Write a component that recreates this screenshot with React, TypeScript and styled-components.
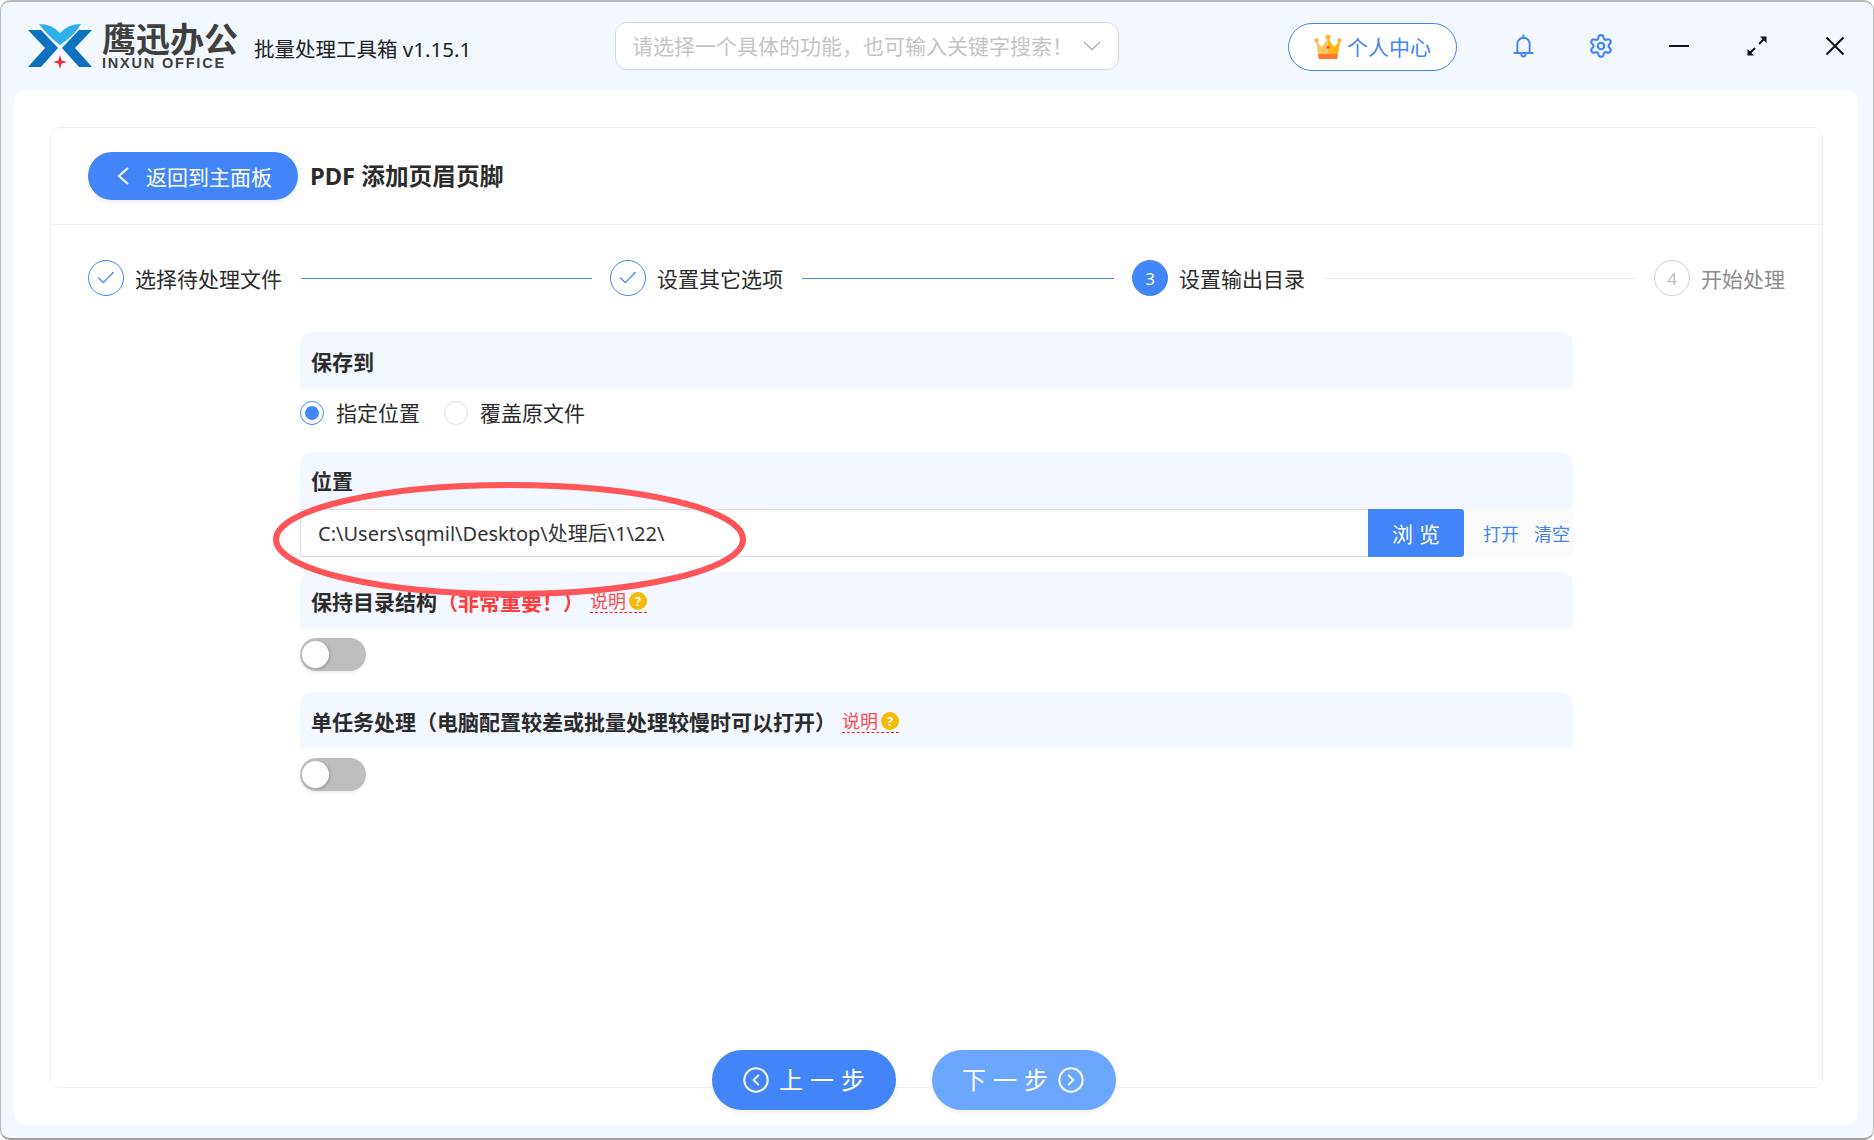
import React from 'react';
import styled, { createGlobalStyle } from 'styled-components';
import { ChevronDown, CircleChevronLeft, CircleChevronRight, Check, Settings } from 'lucide-react';

const BLUE = '#4285f9';

type StepState = 'done' | 'active' | 'todo';

const steps: { label: string; state: StepState; num: number }[] = [
  { label: '选择待处理文件', state: 'done', num: 1 },
  { label: '设置其它选项', state: 'done', num: 2 },
  { label: '设置输出目录', state: 'active', num: 3 },
  { label: '开始处理', state: 'todo', num: 4 },
];

const PATH = 'C:\\Users\\sqmil\\Desktop\\处理后\\1\\22\\';

const Logo = () => (
  <svg width="80" height="56" viewBox="0 0 80 56">
    <path d="M17 6 Q30 6 38 15 Q46 6 59 6 Q52 18 38 27 Q26 18 17 6Z" fill="#2fb0e8" />
    <path d="M6 12 H19 L36 30 L19 49 H6 L23 30Z" fill="#0c72bf" />
    <path d="M70 12 H57 L40 30 L57 49 H70 L53 30Z" fill="#0c72bf" />
    <path d="M38 37 L39.6 42.4 L45 44 L39.6 45.6 L38 51 L36.4 45.6 L31 44 L36.4 42.4Z" fill="#ee2b36" />
  </svg>
);

const Crown = () => (
  <svg width="28" height="26" viewBox="0 0 28 26">
    <path d="M2 7 L8 13 L14 4 L20 13 L26 7 L24 20 H4Z" fill="#fbc667" />
    <path d="M14 4 L20 13 L26 7 L24 20 H14Z" fill="#ffb414" />
    <circle cx="2.5" cy="6.5" r="2.2" fill="#f9b84a" />
    <circle cx="14" cy="3" r="2.6" fill="#f9b84a" />
    <circle cx="25.5" cy="6.5" r="2.2" fill="#f9b84a" />
    <rect x="12.5" y="12" width="3" height="2.5" fill="#e2572b" />
    <path d="M4 20 H24 L23.4 25 H4.6Z" fill="#ff7a30" />
  </svg>
);

const Bell = () => (
  <svg width="21" height="24" viewBox="0 0 24 26" fill="none" stroke={BLUE} strokeWidth="2.2" strokeLinecap="round">
    <path d="M12 1 V3.5" />
    <path d="M5 21 V10.5 a7 7 0 0 1 14 0 V21" />
    <path d="M1.5 21 H22.5" />
    <path d="M9.5 22.5 a2.5 2.5 0 0 0 5 0" />
  </svg>
);

const BackArrow = () => (
  <svg width="14" height="20" viewBox="0 0 14 20" fill="none" stroke="#fff" strokeWidth="2">
    <path d="M12 2 L3 10 L12 18" />
  </svg>
);

const Minimize = () => (
  <svg width="20" height="20" viewBox="0 0 20 20" stroke="#111" strokeWidth="2">
    <path d="M0 10 H20" />
  </svg>
);

const Expand = () => (
  <svg width="20" height="20" viewBox="0 0 20 20" fill="#111" stroke="#111" strokeWidth="2">
    <path d="M2 18 L8 12" />
    <path d="M12 8 L18 2" />
    <path d="M0.5 19.5 V13 L7 19.5Z" strokeWidth="0" />
    <path d="M19.5 0.5 V7 L13 0.5Z" strokeWidth="0" />
  </svg>
);

const Close = () => (
  <svg width="20" height="20" viewBox="0 0 20 20" stroke="#111" strokeWidth="2">
    <path d="M1.5 1.5 L18.5 18.5 M18.5 1.5 L1.5 18.5" />
  </svg>
);

const App: React.FC = () => {
  return (
    <Window>
      <GlobalStyle />
      <Header>
        <Brand>
          <Logo />
          <BrandText>
            <BrandName>鹰迅办公</BrandName>
            <BrandSub>INXUN OFFICE</BrandSub>
          </BrandText>
        </Brand>
        <Subtitle>批量处理工具箱 v1.15.1</Subtitle>
        <Search>
          <SearchHint>请选择一个具体的功能，也可输入关键字搜索！</SearchHint>
          <ChevronDown size={30} color="#aaa" strokeWidth={1} />
        </Search>
        <UserButton>
          <Crown />
          <UserText>个人中心</UserText>
        </UserButton>
        <IconSlot>
          <Bell />
        </IconSlot>
        <IconSlot>
          <Settings size={26} color={BLUE} strokeWidth={2} />
        </IconSlot>
        <IconSlot>
          <Minimize />
        </IconSlot>
        <IconSlot>
          <Expand />
        </IconSlot>
        <IconSlot>
          <Close />
        </IconSlot>
      </Header>
      <Panel>
        <Card>
          <CardHeader>
            <BackButton>
              <BackArrow />
              返回到主面板
            </BackButton>
            <PageTitle>PDF 添加页眉页脚</PageTitle>
          </CardHeader>
          <Stepper>
            {steps.map((step, i) => (
              <Step key={step.num} $last={i === steps.length - 1}>
                <StepCircle $state={step.state}>
                  {step.state === 'done' ? <Check size={22} strokeWidth={1.4} /> : step.num}
                </StepCircle>
                <StepLabel $state={step.state}>{step.label}</StepLabel>
                {i < steps.length - 1 && <StepLine $on={step.state === 'done'} />}
              </Step>
            ))}
          </Stepper>
          <Form>
            <SectionTitle>保存到</SectionTitle>
            <RadioRow>
              <RadioItem>
                <Radio $checked />
                <RadioText>指定位置</RadioText>
              </RadioItem>
              <RadioItem>
                <Radio />
                <RadioText>覆盖原文件</RadioText>
              </RadioItem>
            </RadioRow>
            <LocationTitle>位置</LocationTitle>
            <PathRow>
              <PathInput>{PATH}</PathInput>
              <BrowseButton>浏览</BrowseButton>
              <PathLinks>
                <a>打开</a>
                <a>清空</a>
              </PathLinks>
            </PathRow>
            <KeepTitle>
              保持目录结构<Important>（非常重要！）</Important>
              <Help>
                说明<HelpDot>?</HelpDot>
              </Help>
            </KeepTitle>
            <Toggle>
              <Knob />
            </Toggle>
            <SingleTitle>
              单任务处理（电脑配置较差或批量处理较慢时可以打开）
              <Help>
                说明<HelpDot>?</HelpDot>
              </Help>
            </SingleTitle>
            <Toggle>
              <Knob />
            </Toggle>
            <Ellipse width="473" height="115" viewBox="0 0 473 115">
              <ellipse cx="236.5" cy="57.5" rx="233.5" ry="54.5" fill="none" stroke="#ff5558" strokeWidth="6" />
            </Ellipse>
          </Form>
        </Card>
        <Footer>
          <NavButton>
            <CircleChevronLeft size={28} strokeWidth={1.7} />
            <NavText>上一步</NavText>
          </NavButton>
          <NavButton $light>
            <NavText>下一步</NavText>
            <CircleChevronRight size={28} strokeWidth={1.7} />
          </NavButton>
        </Footer>
      </Panel>
    </Window>
  );
};

export default App;

const GlobalStyle = createGlobalStyle`
  * {
    box-sizing: border-box;
  }
  html, body {
    margin: 0;
    padding: 0;
    background: #fff;
  }
  body {
    font-family: "Noto Sans", "Noto Sans CJK SC", sans-serif;
    font-size: 21px;
    color: #2b2b2b;
  }
`;

const Window = styled.div`
  width: 1874px;
  height: 1140px;
  display: flex;
  flex-direction: column;
  overflow: hidden;
  background: #f3f7ff;
  border-style: solid;
  border-color: #b9b9b9;
  border-width: 2px 1px 2px 1px;
  border-bottom-color: #9c9c9c;
  border-radius: 10px;
`;

const Header = styled.header`
  flex: none;
  height: 88px;
  padding-left: 21px;
  display: flex;
  align-items: center;
  > * {
    flex: none;
  }
`;

const Brand = styled.div`
  width: 232px;
  display: flex;
  align-items: flex-start;
`;

const BrandText = styled.div`
  display: flex;
  flex-direction: column;
  color: #3f3f3f;
  margin-top: 3px;
`;

const BrandName = styled.div`
  font-size: 34px;
  line-height: 36px;
  font-weight: 700;
  white-space: nowrap;
  height: 36px;
`;

const BrandSub = styled.div`
  font-family: "Liberation Sans", sans-serif;
  font-size: 14.5px;
  line-height: 13px;
  font-weight: 700;
  letter-spacing: 1.8px;
  white-space: nowrap;
  height: 13px;
`;

const Subtitle = styled.div`
  width: 361px;
  font-size: 20.5px;
  margin-top: 4px;
  color: #222;
  white-space: nowrap;
`;

const Search = styled.div`
  width: 504px;
  height: 48px;
  padding: 0 11px 0 16px;
  display: flex;
  align-items: center;
  justify-content: space-between;
  background: #fff;
  border: 1px solid #d8d8d8;
  border-radius: 12px;
  color: #c4c4c4;
  font-size: 21px;
  white-space: nowrap;
`;

const SearchHint = styled.span`
  margin-top: -3px;
`;

const UserButton = styled.div`
  width: 169px;
  height: 48px;
  margin: 2px 0 0 169px;
  display: flex;
  align-items: center;
  justify-content: center;
  gap: 5px;
  background: #fff;
  border: 1px solid ${BLUE};
  border-radius: 24px;
  color: ${BLUE};
  white-space: nowrap;
`;

const UserText = styled.span`
  margin-top: -2px;
`;

const IconSlot = styled.div`
  width: 78px;
  display: flex;
  align-items: center;
  justify-content: center;
  &:nth-of-type(5) {
    margin-left: 27px;
  }
`;

const Panel = styled.main`
  flex: 1;
  min-height: 0;
  margin: 0 15px 13px 13px;
  padding: 37px 35px 15px 36px;
  display: flex;
  flex-direction: column;
  background: #fff;
  border-radius: 12px;
`;

const Card = styled.section`
  flex: 1;
  min-height: 0;
  border: 1px solid #eeeeee;
  border-radius: 10px;
`;

const CardHeader = styled.div`
  height: 97px;
  padding-left: 37px;
  display: flex;
  align-items: center;
  gap: 12px;
  border-bottom: 1px solid #f0f0f0;
`;

const BackButton = styled.div`
  width: 210px;
  height: 48px;
  padding-left: 28px;
  display: flex;
  align-items: center;
  gap: 16px;
  background: ${BLUE};
  color: #fff;
  border-radius: 24px;
  box-shadow: 0 3px 4px rgba(0, 0, 0, 0.06);
  white-space: nowrap;
`;

const PageTitle = styled.h1`
  margin: 0 0 3px;
  font-size: 23.7px;
  font-weight: 700;
  color: #2b2b2b;
  white-space: nowrap;
`;

const Stepper = styled.div`
  margin-top: 35px;
  padding: 0 36px 0 37px;
  display: flex;
  align-items: center;
`;

const Step = styled.div<{ $last: boolean }>`
  flex: ${(p) => (p.$last ? 'none' : '1 1 0')};
  min-width: 0;
  display: flex;
  align-items: center;
`;

const StepCircle = styled.div<{ $state: StepState }>`
  flex: none;
  width: 36px;
  height: 36px;
  display: flex;
  align-items: center;
  justify-content: center;
  border-radius: 50%;
  font-size: 17px;
  border: 1px solid ${(p) => (p.$state === 'todo' ? '#cfcfcf' : BLUE)};
  background: ${(p) => (p.$state === 'active' ? BLUE : '#fff')};
  color: ${(p) => (p.$state === 'active' ? '#fff' : p.$state === 'done' ? BLUE : '#bdbdbd')};
`;

const StepLabel = styled.div<{ $state: StepState }>`
  flex: none;
  margin-left: 11px;
  margin-right: 1px;
  color: ${(p) => (p.$state === 'todo' ? '#8c8c8c' : '#2b2b2b')};
  white-space: nowrap;
`;

const StepLine = styled.div<{ $on: boolean }>`
  flex: 1;
  height: 1px;
  margin: 1px 18px 0;
  background: ${(p) => (p.$on ? BLUE : '#e8e8e8')};
`;

const Form = styled.div`
  position: relative;
  width: 1273px;
  margin: 36px 0 0 249px;
`;

const SectionTitle = styled.div`
  height: 57px;
  padding: 0 0 0 11px;
  display: flex;
  align-items: center;
  background: #f3f7ff;
  border-radius: 12px 12px 0 0;
  font-weight: 700;
  color: #2b2b2b;
  white-space: nowrap;
`;

const LocationTitle = styled(SectionTitle)`
  margin-top: 27px;
  padding-bottom: 2px;
`;

const KeepTitle = styled(SectionTitle)`
  margin-top: 15px;
`;

const SingleTitle = styled(SectionTitle)`
  margin-top: 21px;
`;

const Important = styled.span`
  color: #ff3b3b;
`;

const Help = styled.span`
  margin: 2px 0 0 6px;
  display: inline-flex;
  align-items: center;
  gap: 3px;
  font-size: 18px;
  font-weight: 400;
  line-height: 22px;
  color: #ff4d4f;
  border-bottom: 1px dashed #ff2020;
`;

const HelpDot = styled.span`
  width: 18px;
  height: 18px;
  display: inline-flex;
  align-items: center;
  justify-content: center;
  border-radius: 50%;
  background: #f6b800;
  color: #fff;
  font-size: 13px;
  font-weight: 700;
`;

const RadioRow = styled.div`
  margin-top: 12px;
  height: 24px;
  display: flex;
  align-items: center;
  gap: 24px;
`;

const RadioItem = styled.label`
  display: flex;
  align-items: center;
  gap: 12px;
  white-space: nowrap;
`;

const RadioText = styled.span`
  margin-top: -2px;
`;

const Radio = styled.span<{ $checked?: boolean }>`
  width: 24px;
  height: 24px;
  display: flex;
  align-items: center;
  justify-content: center;
  border-radius: 50%;
  border: 1px solid ${(p) => (p.$checked ? BLUE : '#dcdcdc')};
  &::after {
    content: '';
    display: ${(p) => (p.$checked ? 'block' : 'none')};
    width: 14px;
    height: 14px;
    border-radius: 50%;
    background: ${BLUE};
  }
`;

const PathRow = styled.div`
  height: 48px;
  display: flex;
`;

const PathInput = styled.div`
  flex: 1;
  padding: 0 0 2px 17px;
  display: flex;
  align-items: center;
  background: #fff;
  border: 1px solid #dcdcdc;
  border-right: 0;
  border-radius: 3px 0 0 3px;
  font-size: 20px;
  color: #333;
  white-space: nowrap;
`;

const BrowseButton = styled.div`
  flex: none;
  width: 96px;
  padding-left: 6px;
  display: flex;
  align-items: center;
  justify-content: center;
  background: ${BLUE};
  color: #fff;
  letter-spacing: 6px;
  border-radius: 0 3px 3px 0;
`;

const PathLinks = styled.div`
  flex: none;
  width: 109px;
  padding-left: 19px;
  display: flex;
  align-items: center;
  gap: 15px;
  background: #fafafa;
  border-radius: 0 3px 3px 0;
  font-size: 18px;
  color: ${BLUE};
`;

const Toggle = styled.div`
  margin-top: 9px;
  width: 66px;
  height: 33px;
  padding: 3px 2px;
  background: #bdbdbd;
  border-radius: 17px;
  box-shadow: 0 2px 3px rgba(0, 0, 0, 0.08);
`;

const Knob = styled.div`
  width: 27px;
  height: 27px;
  border-radius: 50%;
  background: #fff;
  box-shadow: 1px 1px 3px rgba(0, 0, 0, 0.2);
`;

const Ellipse = styled.svg`
  position: absolute;
  left: -27px;
  top: 150px;
  pointer-events: none;
`;

const Footer = styled.div`
  flex: none;
  margin-top: -38px;
  padding-right: 46px;
  display: flex;
  justify-content: center;
  gap: 36px;
`;

const NavButton = styled.div<{ $light?: boolean }>`
  width: 184px;
  height: 60px;
  display: flex;
  align-items: center;
  justify-content: center;
  gap: 9px;
  border-radius: 30px;
  background: ${(p) => (p.$light ? '#6ba7ff' : BLUE)};
  color: #fff;
  box-shadow: 0 3px 4px rgba(0, 0, 0, 0.06);
`;

const NavText = styled.span`
  margin: -3px -7px 0 0;
  font-size: 24px;
  letter-spacing: 7px;
`;
